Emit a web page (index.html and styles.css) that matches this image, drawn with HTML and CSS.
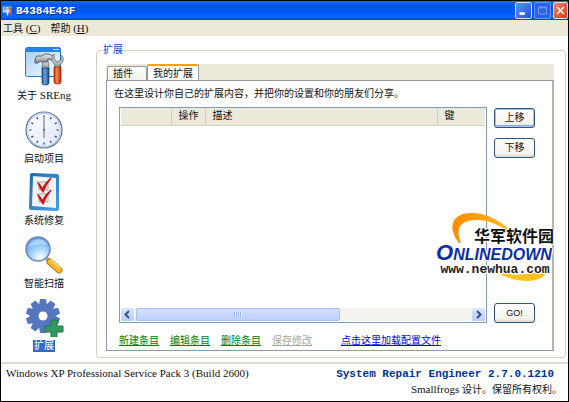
FILE: index.html
```html
<!DOCTYPE html>
<html lang="zh-CN">
<head>
<meta charset="utf-8">
<meta name="viewport" content="width=device-width, initial-scale=1">
<title>B4384E43F</title>
<link rel="stylesheet" href="styles.css">
</head>
<body>
<div class="window">
  <header class="titlebar">
    <svg class="title-icon" viewBox="0 0 40 40" aria-hidden="true">
      <rect x="1" y="2" width="35" height="28" rx="3" fill="#2f8be8"/>
      <rect x="3" y="7" width="31" height="20" fill="#a9cdf3"/>
      <path d="M8 12 18 5l10 3v7H9z" fill="#d5d8db" stroke="#444" stroke-width="2"/>
      <path d="M20 16v22" stroke="#dfe8f2" stroke-width="6"/>
      <path d="M33 10v28" stroke="#df4b1e" stroke-width="7"/>
    </svg>
    <h1 class="title">B4384E43F</h1>
    <div class="caption-buttons">
      <button class="caption" type="button" aria-label="最小化"><svg viewBox="0 0 17 17"><path d="M4 12h6" stroke="#fff" stroke-width="3"/></svg></button>
      <button class="caption caption-off" type="button" aria-label="最大化" disabled><svg viewBox="0 0 17 17"><path d="M4 4.500h9v8H4zM4 5.500h9" fill="none" stroke="#7fa4f5"/></svg></button>
      <button class="caption caption-close" type="button" aria-label="关闭"><svg viewBox="0 0 17 17"><path d="m4 4 9 9m0-9-9 9" stroke="#fff" stroke-width="2"/></svg></button>
    </div>
  </header>
  <nav class="menubar">
    <button class="menu" type="button">工具<span class="latin"> (<u>C</u>)</span></button>
    <button class="menu" type="button">帮助<span class="latin"> (<u>H</u>)</span></button>
  </nav>
  <main class="main">
    <nav class="sidebar">
      <a class="item" href="#about">
        <svg class="item-icon" viewBox="0 0 40 40" aria-hidden="true">
          <defs>
            <linearGradient id="pane" x1="0" y1="0" x2="1" y2="1"><stop offset="0" stop-color="#a5cdf4"/><stop offset="1" stop-color="#f8fcff"/></linearGradient>
            <linearGradient id="steel" x1="0" y1="0" x2="0" y2="1"><stop offset="0" stop-color="#f7f7f7"/><stop offset="1" stop-color="#7c858d"/></linearGradient>
            <linearGradient id="grip-blue"><stop offset="0" stop-color="#1c4f94"/><stop offset=".4" stop-color="#68a8e4"/><stop offset="1" stop-color="#174681"/></linearGradient>
            <linearGradient id="grip-red"><stop offset="0" stop-color="#c22c0c"/><stop offset=".4" stop-color="#ff8a4c"/><stop offset="1" stop-color="#b52708"/></linearGradient>
          </defs>
          <rect x="1.500" y="1.500" width="35" height="29" rx="2" fill="url(#pane)" stroke="#2377d5"/>
          <path d="M1.500 3.500q0-2 2-2h31q2 0 2 2V6h-35z" fill="#2684e6"/>
          <path d="M29 3.500h6" stroke="#bfe0ff"/>
          <path d="M19 14h5l1 9h-7z" fill="url(#steel)" stroke="#59636c" stroke-width=".7"/>
          <path d="M11 14q0-3 2-4h5l3-2q5-1 9 3l-1 3-5-1-1 3h-5l-2-1-2 2h-3z" fill="url(#steel)" stroke="#49525a" stroke-width=".9"/>
          <path d="M30 8v5l3 3 4-2V9q3 2 2 6l-3 4v5h-5v-5l-3-4q-1-5 2-7z" fill="url(#steel)" stroke="#59636c" stroke-width=".8"/>
          <path d="M18 22h7v15q0 2-3.500 2T18 37z" fill="url(#grip-blue)" stroke="#153f74" stroke-width=".7"/>
          <path d="M30 21h7v15q0 2-3.500 2T30 36z" fill="url(#grip-red)" stroke="#8e2108" stroke-width=".7"/>
        </svg>
        <span class="item-label">关于 <span class="latin">SREng</span></span>
      </a>
      <a class="item" href="#startup">
        <svg class="item-icon" viewBox="0 0 40 40" aria-hidden="true">
          <defs><linearGradient id="dial" x1="0" y1="0" x2="1" y2="1"><stop offset="0" stop-color="#fff"/><stop offset="1" stop-color="#dce6f6"/></linearGradient></defs>
          <circle cx="20" cy="20" r="18" fill="url(#dial)" stroke="#62789f" stroke-width="1.200"/>
          <circle cx="20" cy="20" r="16.500" fill="none" stroke="#b9c8e4"/>
          <circle cx="20" cy="20" r="13.500" fill="none" stroke="#33558f" stroke-width="2.200" pathLength="120" stroke-dasharray="2 8" stroke-dashoffset="1"/>
          <path d="M20 8v20" stroke="#5b6b86"/>
          <circle cx="20" cy="20" r="1.200" fill="#8b6a60"/>
        </svg>
        <span class="item-label">启动项目</span>
      </a>
      <a class="item" href="#repair">
        <svg class="item-icon" viewBox="0 0 40 40" aria-hidden="true">
          <defs><linearGradient id="frame" x1="0" y1="0" x2="1" y2="1"><stop offset="0" stop-color="#1f6bb1"/><stop offset="1" stop-color="#45a2e0"/></linearGradient></defs>
          <path d="M6 3q0-2 2-2l25 1q2 0 2 2v33q0 2-2 2l-26-1q-2 0-2-2z" fill="url(#frame)"/>
          <path d="m9 4 23 2v30l-24-2z" fill="#f1f3f5"/>
          <path d="M15 10h9v8h-9zM15 22h9v8h-9z" fill="#e7e8df" stroke="#a8ad99"/>
          <path d="M14 11q3 2 4 6 4-7 9-11-5 6-8 14-3-4-5-9zM14 23q3 2 4 6 4-7 9-11-5 6-8 14-3-4-5-9z" fill="#d91d24" stroke="#c6161d" stroke-width="1.200"/>
        </svg>
        <span class="item-label">系统修复</span>
      </a>
      <a class="item" href="#scan">
        <svg class="item-icon" viewBox="0 0 40 40" aria-hidden="true">
          <defs><radialGradient id="lens" cx=".6" cy=".85" r=".8"><stop offset="0" stop-color="#fff"/><stop offset=".55" stop-color="#9ad0fa"/><stop offset="1" stop-color="#5b9cea"/></radialGradient></defs>
          <path d="m22 23 4 4" stroke="#a3abb5" stroke-width="4"/>
          <path d="m26 27 9 8" stroke="#b97908" stroke-width="7" stroke-linecap="round"/>
          <path d="m26 27 9 8" stroke="#f6b72d" stroke-width="5" stroke-linecap="round"/>
          <path d="m27 25 9 8" stroke="#ffe18a" stroke-width="1.500" stroke-linecap="round"/>
          <circle cx="14" cy="14" r="12" fill="url(#lens)" stroke="#7186b2" stroke-width="1.600"/>
          <path d="M5 12q1-7 9-8 7 0 9 6-9-2-18 2z" fill="#fff" opacity=".4"/>
        </svg>
        <span class="item-label">智能扫描</span>
      </a>
      <a class="item" href="#extensions" aria-current="page">
        <svg class="item-icon" viewBox="0 0 40 40" aria-hidden="true">
          <g fill="#5577bd" transform="translate(2 2)">
            <circle cx="17" cy="17" r="12.500"/>
            <g id="teeth"><path d="M14 0h6l1 6h-8zM14 34h6l1-6h-8z"/></g>
            <use href="#teeth" transform="rotate(36 17 17)"/>
            <use href="#teeth" transform="rotate(72 17 17)"/>
            <use href="#teeth" transform="rotate(108 17 17)"/>
            <use href="#teeth" transform="rotate(144 17 17)"/>
          </g>
          <circle cx="19" cy="19" r="4.500" fill="#fff"/>
          <path d="M27 23h6v6h6v6h-6v5h-6v-5h-6v-6h6z" fill="#329961" stroke="#237846"/>
        </svg>
        <span class="item-label item-label-on">扩展</span>
      </a>
    </nav>
    <fieldset class="group">
      <legend>扩展</legend>
      <div class="tabs" role="tablist">
        <button class="tab" type="button" role="tab" aria-selected="false">插件</button>
        <button class="tab tab-on" type="button" role="tab" aria-selected="true">我的扩展</button>
      </div>
      <section class="panel" role="tabpanel" aria-label="我的扩展">
        <p class="intro">在这里设计你自己的扩展内容，并把你的设置和你的朋友们分享。</p>
        <div class="work">
          <div class="list">
            <table class="grid">
              <colgroup><col class="c-check"><col class="c-op"><col><col class="c-key"></colgroup>
              <thead><tr><th></th><th>操作</th><th>描述</th><th>键</th></tr></thead>
            </table>
            <div class="scroll">
              <button class="arrow" type="button" aria-label="向左滚动"><svg viewBox="0 0 13 13"><path d="M8 3 4.500 6.500 8 10" /></svg></button>
              <div class="track"><div class="thumb"></div></div>
              <button class="arrow" type="button" aria-label="向右滚动"><svg viewBox="0 0 13 13"><path d="M5 3l3.500 3.500L5 10"/></svg></button>
            </div>
          </div>
          <div class="actions">
            <button class="push push-default" type="button">上移</button>
            <button class="push" type="button">下移</button>
            <button class="push push-go" type="button">GO!</button>
          </div>
        </div>
        <div class="links">
          <a href="#new">新建条目</a>
          <a href="#edit">编辑条目</a>
          <a href="#delete">删除条目</a>
          <a class="off" aria-disabled="true">保存修改</a>
          <a class="load" href="#load">点击这里加载配置文件</a>
        </div>
        <div class="brand">
          <svg class="swoosh" viewBox="0 0 118 70" aria-hidden="true">
            <defs><linearGradient id="sun"><stop offset="0" stop-color="#ff8a00"/><stop offset="1" stop-color="#ffc21a"/></linearGradient></defs>
            <path d="M23 31C11 16 15 1 36 1c18 0 35 12 46 26C69 15 54 8 41 8 24 8 19 16 25 31z" fill="url(#sun)"/>
            <path d="M55 57c17 7 38 8 50 0h7c-2 7-8 12-21 12-14 0-27-6-36-12z" fill="#ffc21a"/>
          </svg>
          <span class="brand-cn">华军软件园</span>
          <span class="brand-en"><span class="brand-o">O</span>NLINEDOWN</span>
          <span class="brand-url">www.newhua.com</span>
        </div>
      </section>
    </fieldset>
  </main>
  <footer class="status">
    <p class="latin os">Windows XP Professional Service Pack 3 (Build 2600)</p>
    <div class="about">
      <strong class="product">System Repair Engineer 2.7.0.1210</strong>
      <p class="credit"><span class="latin">Smallfrogs</span> 设计。保留所有权利。</p>
    </div>
  </footer>
</div>
</body>
</html>
```
FILE: styles.css
```css
* { box-sizing: border-box; }
body {
  margin: 0;
  font: 10px/14px "Liberation Sans", "Noto Sans CJK SC", sans-serif;
  color: #111;
}
button { font: inherit; color: inherit; padding: 0; border: 0; background: none; }
p, h1 { margin: 0; }
svg { display: block; }
.latin { font-family: "Liberation Serif", serif; font-size: 11px; }
.window {
  display: flex;
  flex-direction: column;
  min-height: 100vh;
  border: 1px solid #000;
  background: #fff;
}

.titlebar {
  display: flex;
  align-items: center;
  height: 19px;
  padding-left: 1px;
  background: linear-gradient(#1b6df5, #0053e8 25%, #0058f0 60%, #0668ff 85%, #0040bd);
}
.title-icon { width: 11px; height: 11px; margin-right: 3px; }
.title {
  flex: 1;
  font: bold 11px/16px "Liberation Mono", monospace;
  color: #fff;
  text-shadow: 1px 1px #0a2f8c;
}
.caption-buttons { display: flex; gap: 2px; }
.caption {
  width: 17px;
  height: 17px;
  border: 1px solid #d5e2ff;
  border-radius: 2px;
  background: linear-gradient(135deg, #5b8df5, #2257dc);
}
.caption-off { border-color: #6d97f3; background: #2a62e2; }
.caption-close { width: 15px; background: linear-gradient(135deg, #f08462, #d13c12); }

.menubar {
  display: flex;
  gap: 10px;
  height: 16px;
  padding-left: 2px;
  background: #ece9d8;
}
.menu { line-height: 14px; white-space: nowrap; }

.main { flex: 1; display: flex; }
.sidebar {
  flex: 0 0 86px;
  display: flex;
  flex-direction: column;
  align-items: center;
  justify-content: space-between;
  padding: 10px 0;
}
.item {
  display: flex;
  flex-direction: column;
  align-items: center;
  gap: 3px;
  color: inherit;
  text-decoration: none;
}
.item-icon { width: 40px; height: 40px; }
.item-label { line-height: 12px; white-space: nowrap; }
.item-label-on { padding: 0 1px; background: #316ac5; color: #fff; }

.group {
  flex: 1;
  display: flex;
  flex-direction: column;
  min-width: 0;
  margin: 7px 2px 4px 9px;
  padding: 7px 11px 6px 9px;
  border: 1px solid #d0d0bf;
  border-radius: 4px;
}
.group legend { margin-left: -4px; padding: 0 1px; color: #0046d5; }
.tabs {
  display: flex;
  align-items: flex-end;
  height: 17px;
  margin-bottom: -1px;
  padding-left: 1px;
  background: #ece9d8;
}
.tab {
  height: 15px;
  padding: 0 13px 0 5px;
  border: 1px solid #919b9c;
  border-radius: 2px 2px 0 0;
  background: linear-gradient(#fff, #f1f0e8);
}
.tab-on {
  position: relative;
  height: 17px;
  padding: 0 5px;
  border-top: 2px solid #f5a01d;
  border-bottom: 0;
  background: #fff;
}
.panel {
  flex: 1;
  display: flex;
  flex-direction: column;
  position: relative;
  padding: 6px 17px 2px 12px;
  border: 1px solid #919b9c;
  border-right: 2px solid #b4b4aa;
}
.intro { margin: 0 0 6px -5px; }
.work { flex: 1; display: flex; gap: 7px; }
.list {
  flex: 1;
  display: flex;
  flex-direction: column;
  justify-content: space-between;
  min-width: 0;
  padding: 0 1px 1px;
  border: 1px solid #7f9db9;
}
.grid { width: 100%; border-collapse: collapse; table-layout: fixed; }
.c-check { width: 50px; }
.c-op { width: 34px; }
.c-key { width: 48px; }
.grid th {
  height: 17px;
  padding: 0 0 0 7px;
  font-weight: normal;
  text-align: left;
  background: #ebeadb;
  border-right: 1px solid #cfcdbb;
  border-bottom: 1px solid #d6d2c2;
  white-space: nowrap;
}
.grid th:last-child { border-right: 0; }
.scroll { display: flex; height: 13px; background: #f3f2ee; }
.arrow {
  width: 13px;
  border-radius: 2px;
  background: linear-gradient(#dce7ff, #b9ccf6);
}
.arrow path { fill: none; stroke: #31508f; stroke-width: 2; }
.track { flex: 1; padding: 0 2px; }
.thumb {
  display: flex;
  width: 61%;
  height: 13px;
  border: 1px solid #a9c0f4;
  border-radius: 2px;
  background: linear-gradient(#d2dfff, #bdd0fb);
}
.thumb::before {
  content: "";
  width: 8px;
  height: 5px;
  margin: auto;
  background: repeating-linear-gradient(90deg, #9db7ef 0 1px, #e8f0ff 1px 2px);
}

.actions { display: flex; flex-direction: column; gap: 10px; width: 41px; padding-top: 1px; }
.push {
  height: 20px;
  border: 1px solid #2b5584;
  border-radius: 3px;
  background: linear-gradient(#fff, #f4f3ed 80%, #dcd8cc);
}
.push-default { box-shadow: inset 0 0 0 1px #a6c1ee, inset 0 -2px #8aabe6; }
.push-go { margin-top: auto; font-size: 9px; }

.links { display: flex; gap: 11px; margin-top: 11px; white-space: nowrap; }
.links a { color: #008000; text-decoration: underline; }
.links .off { color: #aca899; }
.links .load { margin-left: 18px; color: #0000ee; }

.brand {
  position: absolute;
  right: -2px;
  bottom: 68px;
  width: 118px;
  height: 70px;
  display: flex;
  flex-direction: column;
  white-space: nowrap;
  text-shadow: 1px 0 #fff, -1px 0 #fff, 0 1px #fff, 0 -1px #fff, 1px 1px #fff, -1px -1px #fff;
}
.brand > span { position: relative; }
.swoosh { position: absolute; width: 100%; height: 100%; }
.brand-cn {
  align-self: flex-end;
  margin-top: 16px;
  font-size: 16px;
  line-height: 17px;
  font-weight: bold;
}
.brand-en {
  font-size: 16px;
  line-height: 16px;
  font-weight: bold;
  font-style: italic;
  color: #0b2f9f;
}
.brand-o { font-size: 22px; line-height: 16px; }
.brand-url {
  font: bold 13px/13px "Liberation Mono", monospace;
  text-align: center;
  color: #222;
}

.status {
  display: flex;
  justify-content: space-between;
  padding: 2px 6px 4px 5px;
  border-top: 2px solid #dddcd2;
}
.os { line-height: 14px; }
.about { display: flex; flex-direction: column; align-items: flex-end; }
.product {
  margin-right: 8px;
  font: bold 11px/16px "Liberation Mono", monospace;
  color: #003399;
}
.credit { line-height: 14px; }
```
